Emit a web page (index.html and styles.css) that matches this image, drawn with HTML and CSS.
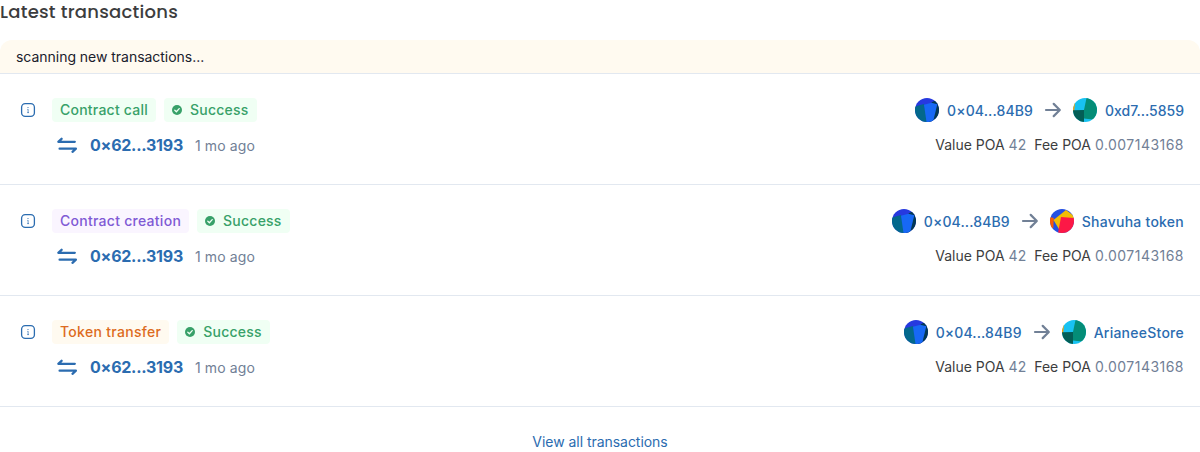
FILE: index.html
```html
<!DOCTYPE html>
<html lang="en">
<head>
<meta charset="utf-8">
<title>Latest transactions</title>
<link rel="stylesheet" href="styles.css">
</head>
<body>
<svg class="sprite" width="0" height="0" aria-hidden="true">
  <symbol id="info" viewBox="0 0 16 16"><rect x="1.6" y="1.6" width="12.8" height="12.8" rx="3.6" fill="none" stroke="currentColor" stroke-width="1.3"/><path d="M8.1 7.2V10.8M7.4 7.4H8.1M7.2 10.6H9" fill="none" stroke="currentColor" stroke-width=".7"/><circle cx="8" cy="5.5" r=".6" fill="currentColor"/></symbol>
  <symbol id="check" viewBox="0 0 10 10"><circle cx="5" cy="5" r="5" fill="currentColor"/><path d="M2.8 5.2 4.4 6.7 7.2 3.6" fill="none" stroke="#f0fff4" stroke-width="1.3" stroke-linecap="round" stroke-linejoin="round"/></symbol>
  <symbol id="swap" viewBox="0 0 30 30"><path d="M22.8 11.8H6.3L9.6 8.8M7.6 18.7H23.9L20.5 21.8" fill="none" stroke="currentColor" stroke-width="2.3" stroke-linecap="round" stroke-linejoin="round"/></symbol>
  <symbol id="arrow" viewBox="0 0 24 24"><path d="M5 12H18.4M12.7 5.9 18.8 12 12.7 18.1" fill="none" stroke="currentColor" stroke-width="2.2" stroke-linecap="round" stroke-linejoin="round"/></symbol>
  <symbol id="blue" viewBox="0 0 24 24"><path fill="#2639df" d="M0 0H24V24H0z"/><path fill="#03688c" d="M0 8.5 9 6 13 24H0z"/><path fill="#033854" d="M16.5 4.6 21 2 24 4V24H14z"/><path fill="#1768f5" d="M9 6.8 16.5 4.7 22.3 6.3 18 24H11.5z"/></symbol>
  <symbol id="teal" viewBox="0 0 24 24"><path fill="#18c2f2" d="M0 0H24V24H0z"/><path fill="#f5a20b" d="M0 4H2.1L1.2 13H0z"/><path fill="#035e56" d="M0 12.3 11 12V24H0z"/><path fill="#048d77" d="M13.5 0H24V22L11 20.5V12z"/></symbol>
  <symbol id="red" viewBox="0 0 24 24"><path fill="#2450e2" d="M0 0H24V24H0z"/><path fill="#fa5a05" d="M0 8 3.8 9 3.3 19 0 20z"/><path fill="#f2bd04" d="M3.5 11 16 1 24 7V12L9.5 21z"/><path fill="#fc1846" d="M11 8 24 9V24H8z"/></symbol>
</svg>
<main class="latest">
  <h1 class="title">Latest transactions</h1>
  <div class="notice">scanning new transactions...</div>
  <article class="row">
    <svg class="info"><use href="#info"/></svg>
    <div class="details">
      <div class="tags"><span class="tag green">Contract call</span><span class="tag green"><svg class="check"><use href="#check"/></svg>Success</span></div>
      <div class="tx"><svg class="swap"><use href="#swap"/></svg><a class="hash">0×62...3193</a><span class="age">1 mo ago</span></div>
    </div>
    <div class="transfer">
      <div class="route"><svg class="avatar"><use href="#blue"/></svg><a class="address sender">0×04...84B9</a><svg class="arrow"><use href="#arrow"/></svg><svg class="avatar"><use href="#teal"/></svg><a class="address plain">0xd7...5859</a></div>
      <div class="amounts"><span>Value POA <span class="num">42</span></span><span>Fee POA <span class="num fee">0.007143168</span></span></div>
    </div>
  </article>
  <article class="row">
    <svg class="info"><use href="#info"/></svg>
    <div class="details">
      <div class="tags"><span class="tag purple">Contract creation</span><span class="tag green"><svg class="check"><use href="#check"/></svg>Success</span></div>
      <div class="tx"><svg class="swap"><use href="#swap"/></svg><a class="hash">0×62...3193</a><span class="age">1 mo ago</span></div>
    </div>
    <div class="transfer">
      <div class="route"><svg class="avatar"><use href="#blue"/></svg><a class="address sender">0×04...84B9</a><svg class="arrow"><use href="#arrow"/></svg><svg class="avatar"><use href="#red"/></svg><a class="address">Shavuha token</a></div>
      <div class="amounts"><span>Value POA <span class="num">42</span></span><span>Fee POA <span class="num fee">0.007143168</span></span></div>
    </div>
  </article>
  <article class="row">
    <svg class="info"><use href="#info"/></svg>
    <div class="details">
      <div class="tags"><span class="tag orange">Token transfer</span><span class="tag green"><svg class="check"><use href="#check"/></svg>Success</span></div>
      <div class="tx"><svg class="swap"><use href="#swap"/></svg><a class="hash">0×62...3193</a><span class="age">1 mo ago</span></div>
    </div>
    <div class="transfer">
      <div class="route"><svg class="avatar"><use href="#blue"/></svg><a class="address sender">0×04...84B9</a><svg class="arrow"><use href="#arrow"/></svg><svg class="avatar"><use href="#teal"/></svg><a class="address">ArianeeStore</a></div>
      <div class="amounts"><span>Value POA <span class="num">42</span></span><span>Fee POA <span class="num fee">0.007143168</span></span></div>
    </div>
  </article>
  <footer class="more"><a>View all transactions</a></footer>
</main>
</body>
</html>
```
FILE: styles.css
```css
* { box-sizing: border-box; }
body { margin: 0; background: #fff; color: #101112; font: 14px/20px Inter, "Liberation Sans", sans-serif; overflow: hidden; }
.sprite { position: absolute; }
svg { display: block; flex: none; }
.latest { height: 452px; overflow: hidden; }
.title { margin: 0; height: 40px; color: #3c3d3e; font: 500 18px/24px Poppins, Inter, sans-serif; letter-spacing: .25px; white-space: nowrap; }
.notice { height: 33px; padding: 7px 16px; border-radius: 12px 12px 0 0; background: #fffaf0; color: #1a202c; letter-spacing: -.03px; }
.row { display: flex; height: 111px; padding: 24px 16px 0; border-top: 1px solid #e2e8f0; }
.info { width: 16px; height: 16px; margin: 4px 16px 0 4px; color: #2b6cb0; }
.details { flex: 1; display: grid; grid-template-rows: 24px 30px; row-gap: 8px; }
.tags { display: flex; gap: 8px; }
.tag { display: flex; align-items: center; height: 24px; padding: 0 8px; border-radius: 4px; font-weight: 500; letter-spacing: .23px; }
.green { background: #f0fff4; color: #38a169; }
.purple { background: #faf5ff; color: #805ad5; letter-spacing: .27px; }
.orange { background: #fffaf0; color: #dd6b20; letter-spacing: .3px; }
.check { width: 10px; height: 10px; margin-right: 8px; }
.tx { display: flex; align-items: center; color: #2b6cb0; }
.swap { width: 30px; height: 30px; margin-right: 8px; }
.hash { width: 94px; font-size: 16px; line-height: 24px; font-weight: 700; letter-spacing: -.25px; white-space: nowrap; }
.age { margin-left: 11px; padding-top: 1px; color: #718096; letter-spacing: .12px; }
.transfer { display: grid; grid-template-rows: 24px 20px; row-gap: 13px; justify-items: end; }
.route { display: flex; align-items: center; color: #2b6cb0; font-weight: 500; }
.avatar { width: 24px; height: 24px; margin-right: 8px; border-radius: 50%; }
.address { padding-top: 1px; letter-spacing: .25px; }
.sender { letter-spacing: .13px; }
.plain { letter-spacing: 0; }
.arrow { width: 24px; height: 24px; margin: 0 8px; color: #718096; }
.amounts { display: flex; gap: 8px; color: #3c3d3e; }
.num { color: #718096; }
.fee { letter-spacing: .47px; }
.more { border-top: 1px solid #e2e8f0; padding-top: 25px; text-align: center; color: #2b6cb0; letter-spacing: -.04px; }
```
